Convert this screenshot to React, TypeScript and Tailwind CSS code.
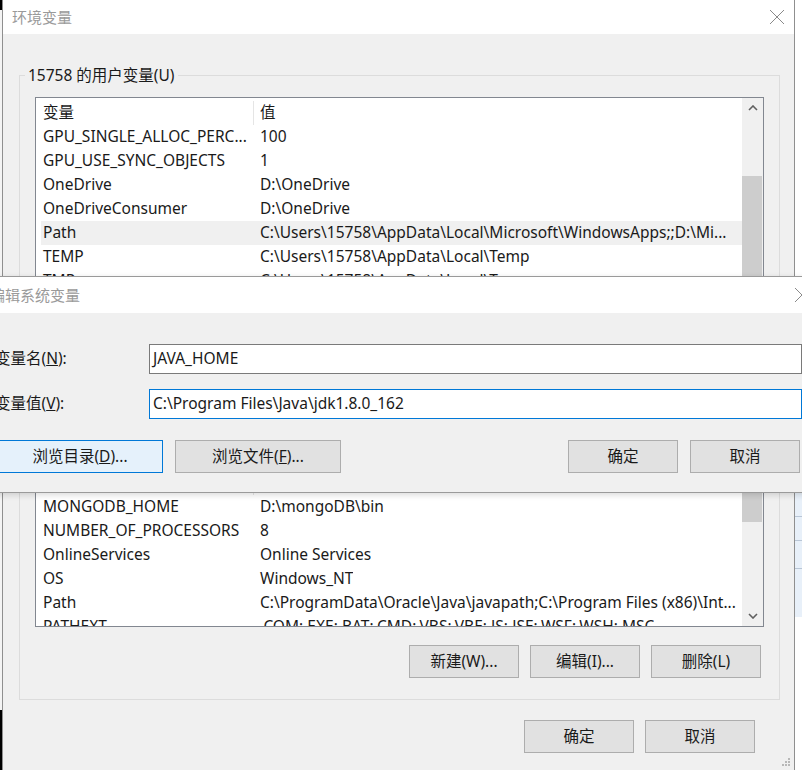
import type { ReactNode } from "react";

type Row = { name: string; value: string; selected?: boolean };

const userVars: Row[] = [
  { name: "GPU_SINGLE_ALLOC_PERC...", value: "100" },
  { name: "GPU_USE_SYNC_OBJECTS", value: "1" },
  { name: "OneDrive", value: "D:\\OneDrive" },
  { name: "OneDriveConsumer", value: "D:\\OneDrive" },
  { name: "Path", value: "C:\\Users\\15758\\AppData\\Local\\Microsoft\\WindowsApps;;D:\\Mi...", selected: true },
  { name: "TEMP", value: "C:\\Users\\15758\\AppData\\Local\\Temp" },
  { name: "TMP", value: "C:\\Users\\15758\\AppData\\Local\\Temp" },
  { name: "", value: "" },
  { name: "", value: "" },
];

const systemVars: Row[] = [
  { name: "MONGODB_HOME", value: "D:\\mongoDB\\bin" },
  { name: "NUMBER_OF_PROCESSORS", value: "8" },
  { name: "OnlineServices", value: "Online Services" },
  { name: "OS", value: "Windows_NT" },
  { name: "Path", value: "C:\\ProgramData\\Oracle\\Java\\javapath;C:\\Program Files (x86)\\Int..." },
  { name: "PATHEXT", value: ".COM;.EXE;.BAT;.CMD;.VBS;.VBE;.JS;.JSE;.WSF;.WSH;.MSC" },
];

function Chevron({ down = false }: { down?: boolean }) {
  return (
    <svg width="10" height="6" viewBox="0 0 10 6" className="text-[#606060]">
      <polyline
        points={down ? "1,1 5,5 9,1" : "1,5 5,1 9,5"}
        fill="none"
        stroke="currentColor"
        strokeWidth="1.6"
      />
    </svg>
  );
}

function CloseIcon({ className = "" }: { className?: string }) {
  return (
    <svg width="16" height="16" viewBox="0 0 16 16" className={className}>
      <path d="M1 1 L15 15 M15 1 L1 15" stroke="currentColor" strokeWidth="1" fill="none" />
    </svg>
  );
}

function WinButton({ children, width, focused = false }: { children: ReactNode; width: string; focused?: boolean }) {
  return (
    <button
      type="button"
      className={`${width} flex h-[33px] shrink-0 items-center justify-center border text-[15.5px] text-[#1a1a1a] ${
        focused ? "border-[#0078d7] bg-[#e5f1fb]" : "border-[#adadad] bg-[#e1e1e1]"
      }`}
    >
      {children}
    </button>
  );
}

function VarList({ rows, height, thumbTop, thumbHeight }: { rows: Row[]; height: string; thumbTop: string; thumbHeight: string }) {
  return (
    <div className={`${height} mx-[15px] flex overflow-hidden border border-[#828790] bg-white`}>
      <div className="min-w-0 flex-1 pt-[3px] pl-[5px]">
        <div className="flex h-[24px] items-center">
          <div className="w-[212px] pl-[2px]">变量</div>
          <div className="h-full w-px bg-[#e5e5e5]" />
          <div className="pl-[6px]">值</div>
        </div>
        {rows.map((row, i) => (
          <div key={i} className={`flex h-[24px] items-center whitespace-nowrap ${row.selected ? "bg-[#f0f0f0]" : ""}`}>
            <div className="w-[212px] overflow-hidden pl-[2px]">{row.name}</div>
            <div className="overflow-hidden pl-[7px]">{row.value}</div>
          </div>
        ))}
      </div>
      <div className="flex w-[21px] shrink-0 flex-col bg-[#f0f0f0]">
        <div className="flex h-[21px] items-center justify-center">
          <Chevron />
        </div>
        <div className={thumbTop} />
        <div className={`${thumbHeight} mr-px bg-[#cdcdcd]`} />
        <div className="flex-1" />
        <div className="flex h-[21px] items-center justify-center">
          <Chevron down />
        </div>
      </div>
    </div>
  );
}

export default function App() {
  return (
    <div className="relative h-[770px] w-[802px] overflow-hidden bg-white text-[15.5px] text-[#1a1a1a] [font-family:'Noto_Sans','Noto_Sans_CJK_SC',sans-serif]">
      <div className="flex h-full">
        {/* desktop sliver on the left */}
        <div className="flex w-[2px] flex-col">
          <div className="h-[10px] bg-black" />
          <div className="flex-1 bg-[#f4f4f4]" />
          <div className="h-[60px] bg-black" />
        </div>

        {/* 环境变量 window */}
        <div className="flex w-[793px] flex-col border-x border-[#8f8f8f]">
          <div className="flex h-[34px] items-center justify-between bg-white pr-[9px] pl-[9px]">
            <span className="text-[15px] text-[#9a9a9a]">环境变量</span>
            <CloseIcon className="text-[#8a8a8a]" />
          </div>

          <div className="flex-1 bg-[#f0f0f0]">
            <fieldset className="mt-[31px] ml-[16px] w-[761px] border border-[#dcdcdc] pb-[21px]">
              <legend className="ml-[5px] px-[3px] leading-[20px]">15758 的用户变量(U)</legend>
              <div className="mt-[12px]">
                <VarList rows={userVars} height="h-[255px]" thumbTop="h-[59px]" thumbHeight="h-[160px]" />
              </div>
              <div className="mt-[18px] flex justify-end gap-[11px] pr-[18px]">
                <WinButton width="w-[110px]">新建(N)...</WinButton>
                <WinButton width="w-[110px]">编辑(E)...</WinButton>
                <WinButton width="w-[110px]">删除(D)</WinButton>
              </div>
            </fieldset>

            <fieldset className="mt-[10px] ml-[16px] w-[761px] border border-[#dcdcdc] pb-[21px]">
              <legend className="ml-[5px] px-[3px] leading-[20px]">系统变量(S)</legend>
              <div className="mt-[12px]">
                <VarList rows={systemVars} height="h-[160px]" thumbTop="h-0" thumbHeight="h-[33px]" />
              </div>
              <div className="mt-[18px] flex justify-end gap-[11px] pr-[18px]">
                <WinButton width="w-[110px]">新建(W)...</WinButton>
                <WinButton width="w-[110px]">编辑(I)...</WinButton>
                <WinButton width="w-[110px]">删除(L)</WinButton>
              </div>
            </fieldset>

            <div className="mt-[20px] flex justify-end gap-[11px] pr-[39px]">
              <WinButton width="w-[110px]">确定</WinButton>
              <WinButton width="w-[110px]">取消</WinButton>
            </div>
            <div className="mt-[4px] flex justify-end pr-[3px]">
              <svg width="12" height="12" viewBox="0 0 12 12" className="text-[#b8b8b8]">
                <rect x="9" y="1" width="2" height="2" fill="currentColor" />
                <rect x="6" y="4" width="2" height="2" fill="currentColor" />
                <rect x="9" y="4" width="2" height="2" fill="currentColor" />
                <rect x="3" y="7" width="2" height="2" fill="currentColor" />
                <rect x="6" y="7" width="2" height="2" fill="currentColor" />
                <rect x="9" y="7" width="2" height="2" fill="currentColor" />
              </svg>
            </div>
          </div>
        </div>

        {/* desktop sliver on the right */}
        <div className="flex w-[7px] flex-col">
          <div className="h-[493px] bg-white" />
          <div className="h-[24px] border-b border-[#b9c6d6] bg-[#e8f0f9]" />
          <div className="h-[24px] border-b border-[#b9c6d6] bg-[#e8f0f9]" />
          <div className="h-[28px] border-b border-[#b9c6d6] bg-[#e8f0f9]" />
          <div className="h-[48px] bg-[#e8f0f9]" />
          <div className="flex-1 bg-white" />
        </div>
      </div>

      {/* 编辑系统变量 dialog, lying over the window */}
      <div className="absolute top-[276px] left-[-12px] flex h-[217px] w-[840px] flex-col border-y border-[#9a9a9a] shadow-[0_2px_6px_rgba(0,0,0,0.15)]">
        <div className="flex h-[36px] items-center justify-between bg-white pr-[18px] pl-[2px]">
          <span className="text-[15px] text-[#9a9a9a]">编辑系统变量</span>
          <CloseIcon className="text-[#8a8a8a]" />
        </div>
        <div className="flex-1 bg-[#f0f0f0] pt-[31px]">
          <div className="flex items-center pl-[7px]">
            <label className="w-[154px] whitespace-nowrap">
              变量名(<span className="underline">N</span>):
            </label>
            <div className="flex h-[30px] w-[653px] items-center border border-[#7a7a7a] bg-white pl-[3px]">JAVA_HOME</div>
          </div>
          <div className="mt-[15px] flex items-center pl-[7px]">
            <label className="w-[154px] whitespace-nowrap">
              变量值(<span className="underline">V</span>):
            </label>
            <div className="flex h-[30px] w-[653px] items-center border border-[#0078d7] bg-white pl-[3px]">
              C:\Program Files\Java\jdk1.8.0_162
            </div>
          </div>
          <div className="mt-[21px] flex pl-[9px]">
            <div className="flex gap-[12px]">
              <WinButton width="w-[166px]" focused>
                浏览目录(<span className="underline">D</span>)...
              </WinButton>
              <WinButton width="w-[166px]">
                浏览文件(<span className="underline">F</span>)...
              </WinButton>
            </div>
            <div className="ml-[227px] flex gap-[12px]">
              <WinButton width="w-[110px]">确定</WinButton>
              <WinButton width="w-[110px]">取消</WinButton>
            </div>
          </div>
        </div>
      </div>
    </div>
  );
}
